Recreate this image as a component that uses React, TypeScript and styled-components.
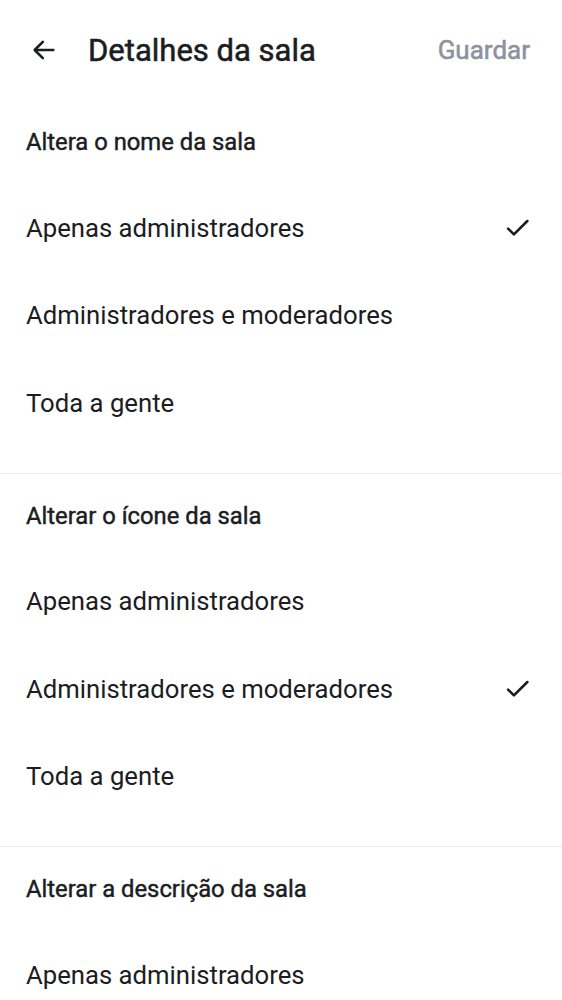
import React from "react";
import styled, { createGlobalStyle, css } from "styled-components";

const Global = createGlobalStyle`
  html, body { margin: 0; padding: 0; background: #ffffff; }
  body { font-family: Roboto, "Noto Sans", sans-serif; color: #1b1d22; }
`;

const medium = css`
  font-weight: 400;
  -webkit-text-stroke: 0.55px currentColor;
`;

const Page = styled.div`
  width: 562px;
  min-height: 1000px;
  background: #fff;
  overflow: hidden;
`;

const Header = styled.header`
  height: 100px;
  display: flex;
  align-items: center;
  padding: 0 32px 0 30px;
  box-sizing: border-box;
`;

const BackButton = styled.button`
  width: 28px;
  height: 28px;
  padding: 0;
  border: none;
  background: none;
  display: flex;
  align-items: center;
  justify-content: center;
  color: #1b1d22;
  margin-right: 30px;
`;

const Title = styled.h1`
  flex: 1;
  margin: 0;
  font-size: 31px;
  ${medium};
  color: #1b1d22;
`;

const SaveButton = styled.button`
  border: none;
  background: none;
  padding: 0;
  font-family: Roboto, sans-serif;
  font-size: 26px;
  ${medium};
  color: #8b939e;
`;

const Section = styled.section<{ $last?: boolean }>`
  padding-bottom: ${(p) => (p.$last ? 0 : 26)}px;
  border-bottom: ${(p) => (p.$last ? "none" : "1px solid #e9ecf0")};
`;

const SectionTitle = styled.h2`
  margin: 0;
  height: 84px;
  display: flex;
  align-items: center;
  padding: 0 26px;
  font-size: 23.8px;
  ${medium};
  -webkit-text-stroke-width: 0.45px;
  color: #1b1d22;
`;

const Option = styled.div`
  height: 87.5px;
  display: flex;
  align-items: center;
  justify-content: space-between;
  padding: 0 30px 0 26px;
  font-size: 25.7px;
  font-weight: 400;
  color: #1b1d22;
`;

const ArrowIcon = () => (
  <svg width="28" height="28" viewBox="0 0 24 24" fill="none" stroke="currentColor" strokeWidth="2.2" strokeLinecap="round" strokeLinejoin="round">
    <path d="M20 12H4.5" />
    <path d="M11 5L4 12l7 7" />
  </svg>
);

const CheckIcon = () => (
  <svg width="28" height="28" viewBox="0 0 24 24" fill="none" stroke="#1b1d22" strokeWidth="2.2" strokeLinecap="round" strokeLinejoin="round">
    <path d="M3.5 12.5l5 5L20 6" />
  </svg>
);

const options = ["Apenas administradores", "Administradores e moderadores", "Toda a gente"];

const sections = [
  { title: "Altera o nome da sala", selected: 0 },
  { title: "Alterar o ícone da sala", selected: 1 },
  { title: "Alterar a descrição da sala", selected: 0, only: 1 },
];

export default function App() {
  return (
    <Page>
      <Global />
      <Header>
        <BackButton aria-label="Voltar">
          <ArrowIcon />
        </BackButton>
        <Title>Detalhes da sala</Title>
        <SaveButton>Guardar</SaveButton>
      </Header>
      {sections.map((s, i) => (
        <Section key={s.title} $last={i === sections.length - 1}>
          <SectionTitle>{s.title}</SectionTitle>
          {options.slice(0, s.only ?? options.length).map((o, j) => (
            <Option key={o}>
              <span>{o}</span>
              {s.selected === j && !s.only ? <CheckIcon /> : null}
            </Option>
          ))}
        </Section>
      ))}
    </Page>
  );
}
